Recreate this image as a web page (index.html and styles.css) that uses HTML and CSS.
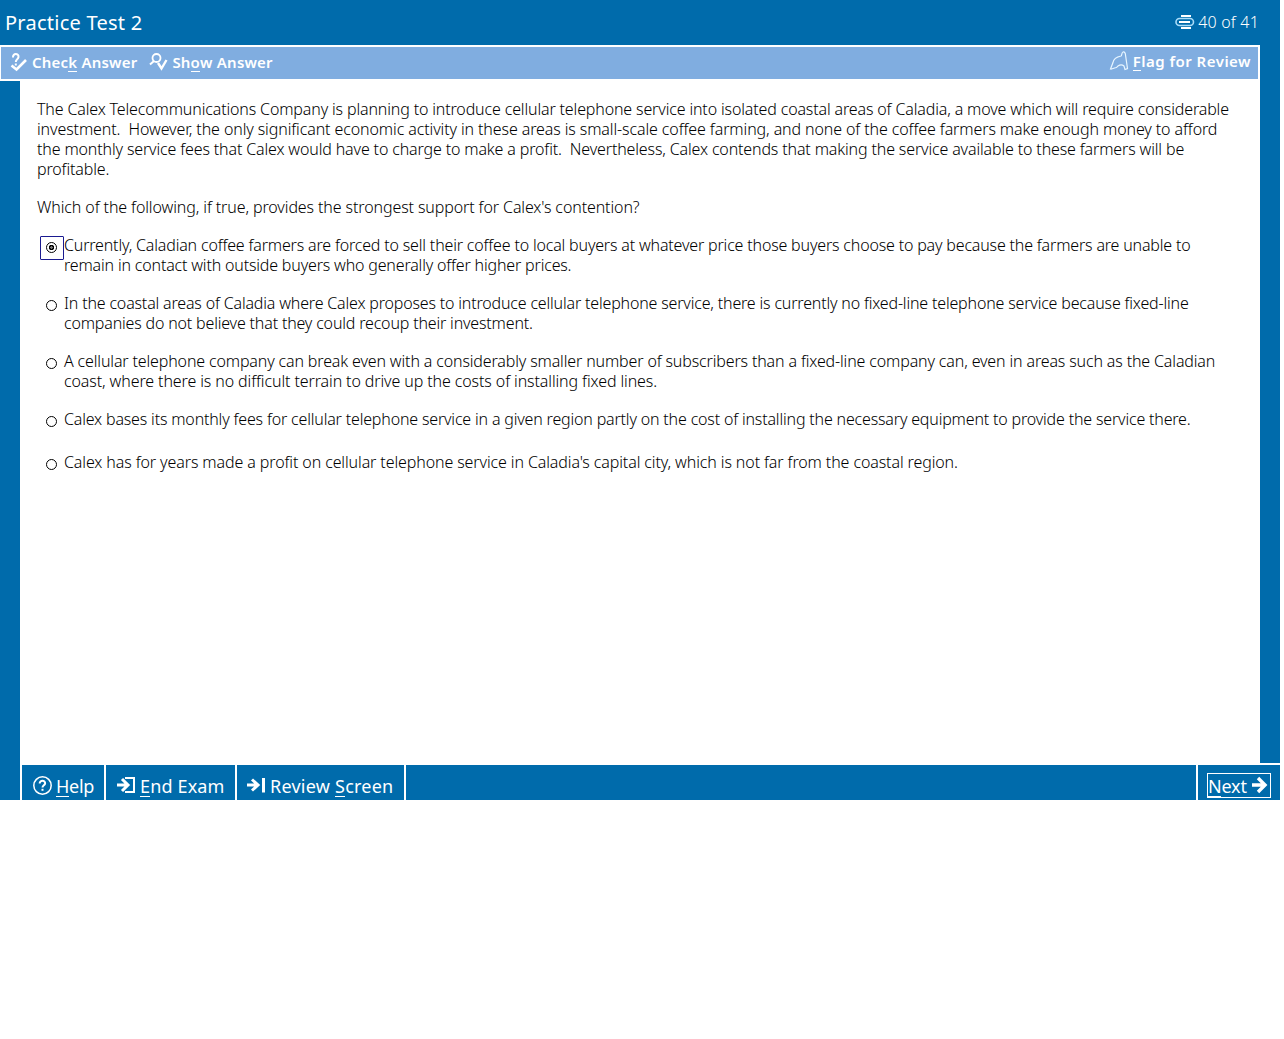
FILE: index.html
```html
<!DOCTYPE html>
<html lang="en">
<head>
  <meta charset="UTF-8" />
  <meta name="viewport" content="width=device-width, initial-scale=1" />
  <title>Practice Test 2</title>
  <link rel="stylesheet" href="styles.css">
</head>
<body>
  <div class="exam">

    <header class="titlebar">
      <h1>Practice Test 2</h1>
      <div class="progress">
        <svg width="20" height="16" viewBox="0 0 20 16" fill="none">
          <rect x="1" y="4.500" width="17.500" height="7" rx="3.500" stroke="#a9dcf8" stroke-width="1.600"/>
          <path d="M6 2h10M4 8h11M6 14h10" stroke="#fff" stroke-width="2"/>
        </svg>
        <span>40 of 41</span>
      </div>
    </header>

    <nav class="toolbar">
      <a class="tool check">
        <svg width="18" height="20" viewBox="0 0 18 20" fill="none" stroke="#fff">
          <path d="M3 5.500C2.500 1 9 1 8.500 5C8 7.500 5.800 7.500 5.800 10" stroke-width="2"/>
          <path d="M5.800 11.500v2" stroke-width="2"/>
          <path d="M1.500 13.500l5 4L16 8" stroke-width="2.600"/>
        </svg>
        <span>Chec<u>k</u> Answer</span>
      </a>
      <a class="tool show">
        <svg width="19" height="20" viewBox="0 0 19 20" fill="none" stroke="#fff">
          <circle cx="7.500" cy="6" r="4" stroke-width="1.800"/>
          <path d="M5 9L1 12.500" stroke-width="2"/>
          <path d="M9 11l3.500 5.500L17.500 8" stroke-width="2.400"/>
        </svg>
        <span>Sh<u>o</u>w Answer</span>
      </a>
      <a class="tool flag">
        <svg width="20" height="22" viewBox="0 0 20 22" fill="none" stroke="#e8f6ff" stroke-width="1.200">
          <path d="M1.500 19L4 12.500C4.500 9 7 7 12 6C13 5.500 12.500 2.500 14 2C15.500 1.500 16.500 3 16.500 5L18.500 18.500L16 19.500L15 16C12 13.500 9 15.500 7.500 17.500C5.500 17.500 3.500 19.500 1.500 19Z"/>
        </svg>
        <span><u>F</u>lag for Review</span>
      </a>
    </nav>

    <main class="question">
      <p class="passage">
        <span class="line">The Calex Telecommunications Company is planning to introduce cellular telephone service into isolated coastal areas of Caladia, a move which will require considerable</span>
        <span class="line loose">investment.&nbsp; However, the only significant economic activity in these areas is small-scale coffee farming, and none of the coffee farmers make enough money to afford</span>
        <span class="line">the monthly service fees that Calex would have to charge to make a profit.&nbsp; Nevertheless, Calex contends that making the service available to these farmers will be</span>
        <span class="line">profitable.</span>
      </p>
      <p class="stem"><span class="line loose">Which of the following, if true, provides the strongest support for Calex's contention?</span></p>

      <ul class="choices">
        <li class="selected">
          <i class="radio"></i>
          <p>
            <span class="line tight">Currently, Caladian coffee farmers are forced to sell their coffee to local buyers at whatever price those buyers choose to pay because the farmers are unable to</span>
            <span class="line tight">remain in contact with outside buyers who generally offer higher prices.</span>
          </p>
        </li>
        <li>
          <i class="radio"></i>
          <p>
            <span class="line tight">In the coastal areas of Caladia where Calex proposes to introduce cellular telephone service, there is currently no fixed-line telephone service because fixed-line</span>
            <span class="line tight">companies do not believe that they could recoup their investment.</span>
          </p>
        </li>
        <li>
          <i class="radio"></i>
          <p>
            <span class="line">A cellular telephone company can break even with a considerably smaller number of subscribers than a fixed-line company can, even in areas such as the Caladian</span>
            <span class="line loose">coast, where there is no difficult terrain to drive up the costs of installing fixed lines.</span>
          </p>
        </li>
        <li class="single">
          <i class="radio"></i>
          <p><span class="line tight">Calex bases its monthly fees for cellular telephone service in a given region partly on the cost of installing the necessary equipment to provide the service there.</span></p>
        </li>
        <li class="single">
          <i class="radio"></i>
          <p><span class="line loose">Calex has for years made a profit on cellular telephone service in Caladia's capital city, which is not far from the coastal region.</span></p>
        </li>
      </ul>
    </main>

    <footer class="bottombar">
      <a class="btn help">
        <svg width="20" height="20" viewBox="0 0 20 20" fill="none" stroke="#fff">
          <circle cx="10.500" cy="9.500" r="8.700" stroke-width="1.500"/>
          <path d="M7.700 7.500C7.500 3.800 13.500 4 13.100 7.500C12.800 9.300 10.500 9.200 10.500 11.500" stroke-width="2"/>
          <path d="M10.500 12.800v2" stroke-width="2"/>
        </svg>
        <span><u>H</u>elp</span>
      </a>
      <a class="btn end">
        <svg width="20" height="18" viewBox="0 0 20 18" fill="none" stroke="#fff">
          <path d="M1 8h10M6 2l6 6l-6 6" stroke-width="3"/>
          <path d="M9 1h9v14h-9" stroke-width="2"/>
        </svg>
        <span><u>E</u>nd Exam</span>
      </a>
      <a class="btn review">
        <svg width="19" height="18" viewBox="0 0 19 18" fill="none" stroke="#fff">
          <path d="M0 8h10M5 2.500l6 5.500l-6 5.500" stroke-width="3"/>
          <path d="M16.500 1v14.500" stroke-width="3"/>
        </svg>
        <span>Review <u>S</u>creen</span>
      </a>
      <a class="btn next">
        <span class="focus">
          <span class="label"><u>N</u>ext</span>
          <svg width="16" height="18" viewBox="0 0 16 18" fill="none" stroke="#fff">
            <path d="M0 9h12M6 2l7 7l-7 7" stroke-width="3.400"/>
          </svg>
        </span>
      </a>
    </footer>

  </div>
</body>
</html>
```
FILE: styles.css
```css
* {
  margin: 0; padding: 0; box-sizing: border-box;
}
body {
  font-family: 'Noto Sans', 'DejaVu Sans', sans-serif;
  background-color: #fff;
  color: #000;
}
u {
  text-decoration: none;
  display: inline-block;
  border-bottom: 1px solid #fff;
}
svg {
  flex: none;
}
.exam {
  width: 1280px;
  height: 800px;
  display: flex;
  flex-direction: column;
  background-color: #006bab;
}

/* title */
.titlebar {
  height: 45px;
  display: flex;
  align-items: center;
  justify-content: space-between;
  padding: 0 21px 1px 5px;
  color: #fff;
}
.titlebar h1 {
  font-size: 20px;
  font-weight: 400;
  letter-spacing: 0.25px;
}
.progress {
  display: flex;
  align-items: center;
  gap: 3px;
  font-size: 16px;
  font-weight: 300;
  letter-spacing: 0.2px;
}

/* tools */
.toolbar {
  width: 1260px;
  height: 36px;
  display: flex;
  align-items: center;
  padding: 0 7px 2px 9px;
  background-color: #80ade0;
  border: 2px solid #fff;
  border-left-width: 1px;
}
.tool {
  display: flex;
  align-items: center;
  gap: 4px;
  color: #fff;
  font-size: 15px;
  font-weight: 600;
  letter-spacing: 0.2px;
}
.tool u {
  line-height: 18px;
}
.show {
  margin-left: 12px;
}
.flag {
  margin-left: auto;
  padding-bottom: 2px;
  letter-spacing: 0.48px;
}

/* question */
.question {
  width: 1240px;
  flex: 1;
  margin-left: 20px;
  padding: 18px 0 0 17px;
  background-color: #fff;
  font-size: 16px;
  font-weight: 300;
  line-height: 20px;
}
.line {
  display: block;
  width: max-content;
  white-space: nowrap;
  letter-spacing: -0.144px;
}
.line.tight {
  letter-spacing: -0.173px;
}
.line.loose {
  letter-spacing: -0.108px;
}
.stem {
  margin-top: 18px;
}
.choices {
  list-style: none;
  margin-top: 18px;
}
.choices li {
  display: flex;
  align-items: flex-start;
  margin-bottom: 18px;
}
.choices .single {
  height: 20px;
  margin-bottom: 23px;
}
.radio {
  flex: none;
  width: 24px;
  height: 24px;
  margin: 1px 0 0 3px;
  display: flex;
  align-items: center;
  justify-content: center;
  border: 1px solid transparent;
}
.radio::before {
  content: '';
  width: 9px;
  height: 9px;
  margin: 0 1px 1px 0;
  border: 1px solid #000;
  border-radius: 50%;
}
.selected .radio {
  border-color: #1a1a90;
  border-radius: 1px;
}
.selected .radio::before {
  background: radial-gradient(circle, #777 0 1px, #000 1.500px 2.500px, #fff 3px);
}

/* bottom buttons */
.bottombar {
  height: 37px;
  margin-left: 20px;
  display: flex;
  border-top: 2px solid #fff;
  border-left: 2px solid #fff;
  color: #fff;
  font-size: 18px;
}
.btn {
  display: flex;
  align-items: center;
  gap: 4px;
  padding: 7px 0 0 10px;
  white-space: nowrap;
  letter-spacing: 0.15px;
  border-right: 2px solid #fff;
}
.btn u {
  line-height: 20px;
}
.help {
  width: 84px;
  letter-spacing: -0.3px;
}
.end { width: 131px; }
.review {
  width: 169px;
  letter-spacing: 0.23px;
}
.next {
  width: 84px;
  margin-left: auto;
  padding: 0 0 0 9px;
  border-left: 2px solid #fff;
  border-right: 0;
  letter-spacing: -0.2px;
}
.focus {
  width: 64px;
  height: 25px;
  margin-top: 5px;
  display: flex;
  align-items: center;
  gap: 5px;
  border: 1px solid #fff;
}
.label {
  padding-top: 2px;
}
```
